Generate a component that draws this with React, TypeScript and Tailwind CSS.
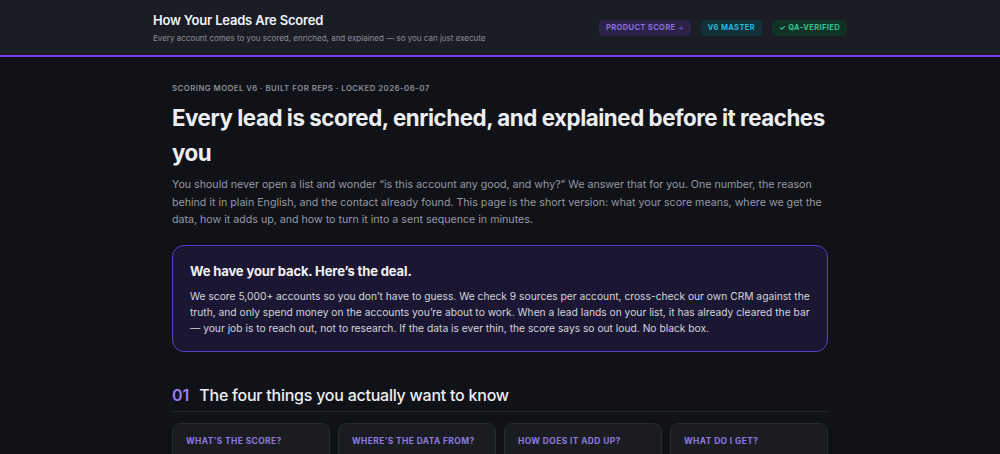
const cards = [
  "What’s the score?",
  "Where’s the data from?",
  "How does it add up?",
  "What do I get?",
];

function Badge({ children, className }: { children: React.ReactNode; className: string }) {
  return (
    <span className={`rounded px-[7px] py-[4px] text-[7.5px] font-bold uppercase leading-[8px] tracking-[0.05em] ${className}`}>
      {children}
    </span>
  );
}

export default function App() {
  return (
    <div className="min-h-screen bg-[#111217] font-['Inter',sans-serif] text-[#e8e9ee]">
      <header className="border-b-2 border-[#7c3aed] bg-[#1b1d24]">
        <div className="mx-auto flex h-[55px] max-w-[694px] items-center justify-between">
          <div>
            <h1 className="text-[13px] font-semibold leading-[16px] tracking-[-0.015em] text-[#f1f2f5]">How Your Leads Are Scored</h1>
            <p className="mt-[5px] text-[8px] leading-[10px] text-[#8b8e98]">
              Every account comes to you scored, enriched, and explained — so you can just execute
            </p>
          </div>
          <div className="flex items-center gap-[10px]">
            <Badge className="bg-[#2a2347] text-[#8a6fdc]">
              Product Score <span className="text-[6px] font-normal">→</span>
            </Badge>
            <Badge className="bg-[#13303a] text-[#22b8d6]">V6 Master</Badge>
            <Badge className="bg-[#123126] text-[#34c38f]">✓ QA-Verified</Badge>
          </div>
        </div>
      </header>

      <main className="mx-auto max-w-[656px] pt-[25px]">
        <p className="text-[7.8px] font-semibold uppercase leading-[12px] tracking-[0.06em] text-[#8b8e98]">
          Scoring Model v6 · Built for Reps · Locked 2026-06-07
        </p>
        <h2 className="mt-[6px] text-[22.3px] font-bold leading-[35px] tracking-[-0.02em] text-[#eceef2]">
          Every lead is scored, enriched, and explained before it reaches you
        </h2>
        <p className="mt-[6px] text-[10.65px] leading-[17.5px] text-[#9598a3]">
          You should never open a list and wonder “is this account any good, and why?” We answer that for you. One number, the reason behind it in plain English, and the contact already found. This page is the short version: what your score means, where we get the data, how it adds up, and how to turn it into a sent sequence in minutes.
        </p>

        <div className="mt-[16px] rounded-[12px] border border-[#5b3fc0] bg-[#1b1733] px-[17px] pb-[15px] pt-[16px]">
          <h3 className="text-[13px] font-bold leading-[18px] tracking-[-0.01em] text-[#f1f2f5]">We have your back. Here’s the deal.</h3>
          <p className="mt-[8px] text-[10.25px] leading-[16px] text-[#d4d5dc]">
            We score 5,000+ accounts so you don’t have to guess. We check 9 sources per account, cross-check our own CRM against the truth, and only spend money on the accounts you’re about to work. When a lead lands on your list, it has already cleared the bar — your job is to reach out, not to research. If the data is ever thin, the score says so out loud. No black box.
          </p>
        </div>

        <div className="mt-[32px] flex items-baseline gap-[10px] border-b border-[#23252d] pb-[5px]">
          <span className="text-[16px] font-semibold leading-[22px] text-[#9b7ff0]">01</span>
          <h2 className="text-[16px] font-medium leading-[22px] tracking-[-0.015em] text-[#eceef2]">The four things you actually want to know</h2>
        </div>

        <div className="mt-[11px] grid grid-cols-4 gap-[8px]">
          {cards.map((c) => (
            <div key={c} className="h-[80px] rounded-[8px] border border-[#262830] bg-[#1a1c22] px-[13px] pt-[11px]">
              <p className="text-[8.4px] font-bold uppercase leading-[12px] tracking-[0.05em] text-[#8f7ae0]">{c}</p>
            </div>
          ))}
        </div>
      </main>
    </div>
  );
}
